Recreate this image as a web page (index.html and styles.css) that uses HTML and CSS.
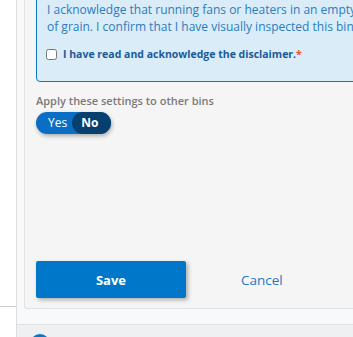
FILE: index.html
```html
<!DOCTYPE html>
<html lang="en">
<head>
    <meta charset="UTF-8">
    <meta name="viewport" content="width=device-width, initial-scale=1.0">
    <title>Bin Settings</title>
    <link rel="stylesheet" href="styles.css">
</head>
<body>
    <div class="layout">
        <div class="sidebar">
            <div class="sidebar-top"></div>
        </div>

        <div class="main">
            <div class="card">
                <div class="disclaimer">
                    <p>I acknowledge that running fans or heaters in an empty bin may cause damage and the loss<br>
                    of grain. I confirm that I have visually inspected this bin and that it is empty.</p>
                    <label class="ack">
                        <input type="checkbox">
                        <span>I have read and acknowledge the disclaimer.<span class="required">*</span></span>
                    </label>
                </div>

                <div class="field">
                    <div class="field-label">Apply these settings to other bins</div>
                    <div class="toggle">
                        <span class="toggle-option">Yes</span>
                        <span class="toggle-option active">No</span>
                    </div>
                </div>

                <div class="actions">
                    <button class="btn-save">Save</button>
                    <a href="#" class="btn-cancel">Cancel</a>
                </div>
            </div>

            <div class="footer">
                <span class="footer-icon"></span>
            </div>
        </div>
    </div>
</body>
</html>
```

FILE: styles.css
```css
body {
    margin: 0;
    font-family: "Open Sans", Arial, sans-serif;
    background-color: #ffffff;
    overflow: hidden;
}
.layout {
    display: flex;
    height: 337px;
}
.sidebar {
    width: 16px;
    flex-shrink: 0;
    border-right: 1px solid #dddddd;
    background-color: #ffffff;
}
.sidebar-top {
    height: 306px;
    border-bottom: 1px solid #cfcfcf;
}
.main {
    flex: 1;
    display: flex;
    flex-direction: column;
    background-color: #f8f9fa;
    padding-left: 7px;
    overflow: hidden;
}
.card {
    margin-top: -11px;
    margin-right: -40px;
    padding: 0 11px 10px 11px;
    background-color: #f5f5f5;
    border: 1px solid #e2e2e2;
    border-top: none;
    border-radius: 0 0 3px 3px;
}
.disclaimer {
    background-color: #d9ecf7;
    border: 1px solid #0a77c9;
    border-radius: 4px;
    padding: 11px 10px 19px 10px;
}
.disclaimer p {
    margin: 0 0 11px 0;
    white-space: nowrap;
    font-size: 12px;
    line-height: 17px;
    color: #2a7cc0;
}
.ack {
    display: flex;
    align-items: center;
    gap: 6px;
    height: 16px;
    font-size: 10.5px;
    font-weight: 700;
    color: #1b5a98;
}
.ack input {
    margin: 0 0 0 -1px;
    width: 11px;
    height: 11px;
}
.required {
    color: #e8542f;
}
.field {
    margin-top: 11px;
}
.field-label {
    font-size: 11px;
    line-height: 15px;
    font-weight: 600;
    color: #7a7a7a;
    margin-bottom: 2px;
}
.toggle {
    display: inline-flex;
    background-color: #0a6fc4;
    border-radius: 11px;
    box-shadow: 1px 2px 4px rgba(0, 0, 0, 0.3);
}
.toggle-option {
    height: 22px;
    line-height: 22px;
    padding: 0 5px 0 12px;
    font-size: 12px;
    color: #ffffff;
    border-radius: 11px;
}
.toggle-option.active {
    background-color: #073f6e;
    font-weight: 700;
    padding: 0 13px 0 9px;
}
.actions {
    display: flex;
    align-items: center;
    margin-top: 127px;
}
.btn-save {
    width: 150px;
    height: 37px;
    border: none;
    border-radius: 2px;
    background-color: #0077c8;
    color: #ffffff;
    font-family: "Open Sans", Arial, sans-serif;
    font-size: 13px;
    font-weight: 700;
    box-shadow: 2px 2px 4px rgba(0, 0, 0, 0.3);
    cursor: pointer;
}
.btn-cancel {
    margin-left: 55px;
    font-size: 13.5px;
    color: #1e78c8;
    text-decoration: none;
}
.footer {
    margin-top: 15px;
    margin-left: -7px;
    flex: 1;
    border-top: 1px solid #e0e0e0;
    background-color: #eff0f2;
    padding: 9px 0 0 13px;
}
.footer-icon {
    display: block;
    width: 20px;
    height: 20px;
    border-radius: 50%;
    border: 3px solid #0a77c9;
    box-sizing: border-box;
}
```
